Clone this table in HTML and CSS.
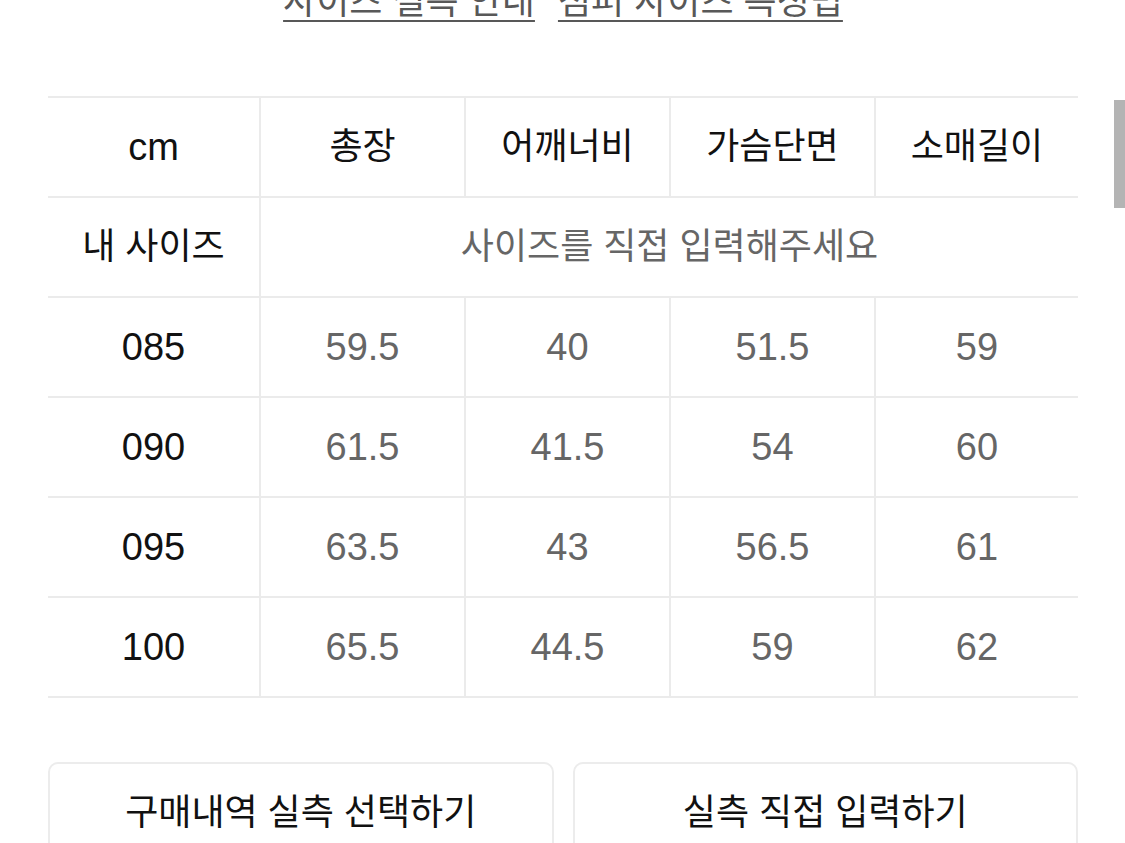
FILE: index.html
```html
<!DOCTYPE html>
<html lang="ko">
<head>
<meta charset="utf-8">
<link rel="stylesheet" href="styles.css">
</head>
<body>
<div class="page">
  <div class="links">
    <a class="link" href="#">사이즈 실측 안내</a>
    <a class="link" href="#">점퍼 사이즈 측정법</a>
  </div>
  <table class="size-table">
    <colgroup>
      <col class="c-first"><col class="c"><col class="c"><col class="c"><col class="c-last">
    </colgroup>
    <tr class="head">
      <th class="latin">cm</th><th>총장</th><th>어깨너비</th><th>가슴단면</th><th>소매길이</th>
    </tr>
    <tr>
      <th>내 사이즈</th><td class="hint" colspan="4">사이즈를 직접 입력해주세요</td>
    </tr>
    <tr><th class="latin">085</th><td class="latin">59.5</td><td class="latin">40</td><td class="latin">51.5</td><td class="latin">59</td></tr>
    <tr><th class="latin">090</th><td class="latin">61.5</td><td class="latin">41.5</td><td class="latin">54</td><td class="latin">60</td></tr>
    <tr><th class="latin">095</th><td class="latin">63.5</td><td class="latin">43</td><td class="latin">56.5</td><td class="latin">61</td></tr>
    <tr><th class="latin">100</th><td class="latin">65.5</td><td class="latin">44.5</td><td class="latin">59</td><td class="latin">62</td></tr>
  </table>
  <div class="actions">
    <button class="btn">구매내역 실측 선택하기</button>
    <button class="btn">실측 직접 입력하기</button>
  </div>
  <div class="scroll-thumb"></div>
</div>
</body>
</html>
```
FILE: styles.css
```css
html, body {
  margin: 0;
  padding: 0;
  background: #ffffff;
  overflow: hidden;
}
body {
  font-family: "Liberation Sans", "Noto Sans CJK KR", sans-serif;
  color: #111111;
}
.page {
  position: relative;
  width: 1125px;
  height: 843px;
  overflow: hidden;
}
.links {
  display: flex;
  justify-content: center;
  gap: 23px;
  margin-top: -18px;
  height: 48px;
  line-height: 40px;
  padding-left: 1px;
}
.link {
  font-size: 36px;
  color: #585858;
  text-decoration: underline;
  text-decoration-thickness: 2px;
  text-underline-offset: 6px;
}
.size-table {
  margin: 66px 47px 0 48px;
  width: 1030px;
  border-collapse: collapse;
  table-layout: fixed;
  border-top: 2px solid #ebebeb;
}
.c-first { width: 212px; }
.c { width: 205px; }
.c-last { width: 203px; }
.size-table th,
.size-table td {
  height: 98px;
  padding: 0;
  text-align: center;
  vertical-align: middle;
  font-size: 36px;
  line-height: 40px;
  border-bottom: 2px solid #ebebeb;
  border-left: 2px solid #ebebeb;
}
.size-table .latin {
  font-size: 38px;
}
.size-table tr > :first-child {
  border-left: none;
}
.size-table th {
  font-weight: normal;
  color: #111111;
}
.size-table td {
  color: #666666;
}
.actions {
  display: flex;
  gap: 19px;
  margin: 64px 47px 0 48px;
}
.btn {
  flex: 1;
  height: 100px;
  background: #ffffff;
  border: 2px solid #ececec;
  border-radius: 10px;
  font-family: "Liberation Sans", "Noto Sans CJK KR", sans-serif;
  font-size: 36px;
  color: #111111;
  padding: 0 0 6px;
}
.scroll-thumb {
  position: absolute;
  right: 0;
  top: 100px;
  width: 11px;
  height: 108px;
  background: #b4b4b4;
}
```
